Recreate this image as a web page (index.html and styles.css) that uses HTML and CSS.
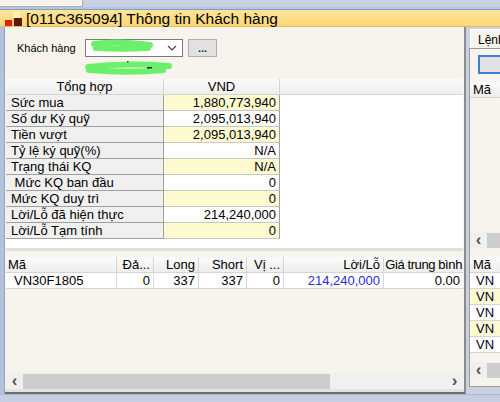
FILE: index.html
```html
<!DOCTYPE html>
<html>
<head>
<meta charset="utf-8">
<link rel="stylesheet" href="styles.css">
</head>
<body>
<div class="screen">
  <div class="topstrip"><div class="tl"></div><div class="tr"></div></div>
  <div class="wintop"></div>
  <div class="titlebar">
    <svg class="ticon" width="18" height="16" viewBox="0 0 18 16">
      <rect x="8" y="0" width="7" height="7" fill="#fff3b0"/>
      <rect x="0" y="9" width="7" height="6" fill="#e02010"/>
      <rect x="9" y="7" width="8" height="8" fill="#5a1a10"/>
      <rect x="7" y="7" width="2" height="8" fill="#f0c860"/>
    </svg>
    <span class="ttext">[011C365094] Thông tin Khách hàng</span>
  </div>
  <div class="content">
    <div class="lframe"></div>
    <div class="main">
      <div class="cust">
        <div class="custrow">
          <span class="custlabel">Khách hàng</span>
          <div class="combo">
            <svg class="blur1" width="70" height="14" viewBox="0 0 70 14">
              <path d="M6 5 C20 3 40 3 62 6 M8 9 C25 10 45 10 60 9" stroke="#6cf06c" stroke-width="6" stroke-linecap="round" fill="none"/>
            </svg>
            <svg class="chev" width="10" height="6" viewBox="0 0 10 6"><path d="M1 1 L5 5 L9 1" stroke="#404040" stroke-width="1.2" fill="none"/></svg>
          </div>
          <div class="btn">...</div>
        </div>
        <svg class="blur2" width="92" height="14" viewBox="0 0 92 14">
          <path d="M5 6 C30 3 60 3 86 5 M6 9 C30 11 60 11 80 9" stroke="#6cf06c" stroke-width="6" stroke-linecap="round" fill="none"/>
          <rect x="64" y="6" width="5" height="1.5" fill="#202020"/>
          <rect x="44" y="0" width="1.5" height="1.5" fill="#404040"/>
        </svg>
      </div>

      <div class="summary">
        <div class="srow shead"><div class="c1">Tổng hợp</div><div class="c2">VND</div><div class="c3"></div></div>
        <div class="srow"><div class="c1">Sức mua</div><div class="c2 y">1,880,773,940</div><div class="c3"></div></div>
        <div class="srow"><div class="c1">Số dư Ký quỹ</div><div class="c2">2,095,013,940</div><div class="c3"></div></div>
        <div class="srow"><div class="c1">Tiền vượt</div><div class="c2 y">2,095,013,940</div><div class="c3"></div></div>
        <div class="srow"><div class="c1">Tỷ lệ ký quỹ(%)</div><div class="c2">N/A</div><div class="c3"></div></div>
        <div class="srow"><div class="c1">Trạng thái KQ</div><div class="c2 y">N/A</div><div class="c3"></div></div>
        <div class="srow"><div class="c1">&nbsp;Mức KQ ban đầu</div><div class="c2">0</div><div class="c3"></div></div>
        <div class="srow"><div class="c1">Mức KQ duy trì</div><div class="c2 y">0</div><div class="c3"></div></div>
        <div class="srow"><div class="c1">Lời/Lỗ đã hiện thực</div><div class="c2">214,240,000</div><div class="c3"></div></div>
        <div class="srow"><div class="c1">Lời/Lỗ Tạm tính</div><div class="c2 y">0</div><div class="c3"></div></div>
        <div class="sfill"></div>
      </div>

      <div class="positions">
        <div class="prow phead">
          <div class="p1 l">Mã</div><div class="p2">Đả...</div><div class="p3">Long</div><div class="p4">Short</div><div class="p5">Vị ...</div><div class="p6">Lời/Lỗ</div><div class="p7 tight">Giá trung bình</div>
        </div>
        <div class="prow pdata">
          <div class="p1 l ind">VN30F1805</div><div class="p2">0</div><div class="p3">337</div><div class="p4">337</div><div class="p5">0</div><div class="p6 blue">214,240,000</div><div class="p7">0.00</div>
        </div>
        <div class="pfill"></div>
        <div class="hscroll">
          <span class="arr">&lsaquo;</span>
          <div class="track"><div class="thumb"></div></div>
          <span class="arr">&rsaquo;</span>
        </div>
      </div>
    </div>
    <div class="side">
      <div class="tab">Lệnh</div>
      <div class="sbox">
        <div class="sbtn"></div>
        <div class="sgrid1">
          <div class="sh">Mã</div>
          <div class="sgfill"></div>
          <div class="sscroll"><span class="arr">&lsaquo;</span><div class="sthumb"></div></div>
        </div>
        <div class="sgrid2">
          <div class="sh">Mã</div>
          <div class="sr">VN</div>
          <div class="sr y">VN</div>
          <div class="sr">VN</div>
          <div class="sr y">VN</div>
          <div class="sr">VN</div>
          <div class="sgfill"></div>
          <div class="sscroll"><span class="arr">&lsaquo;</span><div class="sthumb"></div></div>
        </div>
      </div>
    </div>
  </div>
  <div class="bottomband"></div>
</div>
</body>
</html>
```

FILE: styles.css
```css
* { box-sizing: border-box; }
html, body { margin: 0; padding: 0; }
body {
  width: 500px; height: 402px; overflow: hidden;
  font-family: "Liberation Sans", Arial, sans-serif;
  font-size: 13px; color: #000;
  background: #c9d2e3;
}
.screen { width: 500px; height: 402px; display: flex; flex-direction: column; }

.topstrip { height: 7px; display: flex; }
.tl { width: 83px; background: #f6f4ec; border-right: 1px solid #b0b0b0; border-bottom: 1px solid #b0b0b0; }
.tr { flex: 1; background: #c9d2e3; }
.wintop { height: 3px; background: #b7c6de; border-bottom: 1px solid #7f9fd0; }

.titlebar {
  height: 17px; display: flex; align-items: center;
  background: linear-gradient(#fde39a, #fdd876);
  border-bottom: 1px solid #e3bc5c;
  padding-left: 5px;
}
.ticon { flex: none; margin-top: 1px; }
.ttext { font-size: 15.5px; margin-left: 3px; line-height: 17px; white-space: nowrap; }

.content { flex: 1; display: flex; min-height: 0; }
.lframe { width: 5px; flex: none; background: #b3c2da; border-right: 1px solid #8fa4c6; }
.main {
  width: 461px; flex: none; display: flex; flex-direction: column;
  background: #f6f4ec;
  border-right: 2px solid #8c8c8c;
  border-bottom: 2px solid #6e6e6e;
  box-shadow: inset 0 -3px 0 #e4e2da;
  padding-left: 1px;
}

.cust { height: 52px; position: relative; }
.custrow { display: flex; align-items: center; padding: 12px 0 0 11px; }
.custlabel { font-size: 11px; width: 68px; }
.combo {
  width: 98px; height: 18px; background: #fff; border: 1px solid #7a7a7a;
  display: flex; align-items: center; justify-content: space-between;
  padding: 0 5px 0 2px;
}
.blur1 { margin-top: -4px; filter: blur(0.6px); }
.btn {
  width: 29px; height: 18px; margin-left: 5px;
  background: #e1e1e1; border: 1px solid #adadad;
  font-size: 11px; font-weight: bold; color: #203050;
  display: flex; align-items: center; justify-content: center; line-height: 1;
}
.blur2 { position: absolute; left: 77px; top: 34px; filter: blur(0.6px); }

.summary { width: 457px; height: 172px; background: #fff; display: flex; flex-direction: column; border-bottom: 3px solid #e0e0e0; }
.srow { display: flex; height: 16px; flex: none; }
.srow > div { line-height: 15px; white-space: nowrap; }
.c1 { width: 158px; background: #f0f0f0; border-right: 1px solid #a0a0a0; border-bottom: 1px solid #a0a0a0; padding-left: 5px; }
.c2 { width: 116px; text-align: right; padding-right: 3px; border-right: 1px solid #a0a0a0; border-bottom: 1px solid #c8c8c8; }
.c2.y { background: #fffbd0; }
.c3 { flex: 1; }
.shead { background: linear-gradient(#fbfbfb, #ededed); }
.shead > div { background: transparent; border-bottom: 1px solid #d5d5d5; text-align: center; padding: 0; }
.shead .c1, .shead .c2 { border-right: 1px solid #d5d5d5; }
.shead .c3 { border-bottom: 1px solid #d5d5d5; }
.sfill { flex: 1; }

.positions { width: 457px; margin-top: 6px; flex: 1; display: flex; flex-direction: column; }
.prow { display: flex; height: 16px; flex: none; }
.prow > div { line-height: 15px; white-space: nowrap; text-align: right; padding-right: 3px; border-right: 1px solid #d5d5d5; border-bottom: 1px solid #d5d5d5; overflow: hidden; }
.phead { background: linear-gradient(#fbfbfb, #ededed); }
.pdata { background: #fff; }
.pdata > div { border-right-color: #dadada; }
.p1 { width: 111px; }
.p2 { width: 37px; }
.p3 { width: 45px; }
.p4 { width: 48px; }
.p5 { width: 37px; }
.p6 { width: 100px; }
.p7 { flex: 1; border-right: none !important; }
.prow > .tight { letter-spacing: -0.4px; padding-right: 1px; }
.l { text-align: left !important; padding-left: 2px; }
.ind { padding-left: 8px; }
.blue { color: #2b2bdc; }
.pfill { flex: 1; }
.hscroll { height: 16px; display: flex; align-items: center; background: #f0f0f0; margin-bottom: 3px; }
.arr { width: 17px; flex: none; text-align: center; font-size: 17px; line-height: 14px; color: #505050; font-weight: bold; }
.track { flex: 1; height: 15px; }
.thumb { width: 307px; height: 15px; background: #cdcdcd; }

.side { flex: 1; min-width: 0; overflow: hidden; padding: 2px 0 7px 3px; display: flex; flex-direction: column; }
.tab { height: 19px; margin-left: 1px; padding: 3px 0 0 7px; border-left: 1px solid #fff; border-top: 1px solid #fff; font-size: 12px; white-space: nowrap; background: #f6f4ec; }
.sbox { flex: 1; border: 1px solid #9a9a9a; border-right: none; padding: 6px 0 0 0; display: flex; flex-direction: column; background: #f6f4ec; }
.sbtn { height: 19px; margin-left: 8px; border: 2px solid #3c80d8; border-right: none; background: #e1e1e1; }
.sgrid1 { margin-top: 8px; height: 166px; display: flex; flex-direction: column; }
.sh { height: 16px; line-height: 15px; padding-left: 3px; background: linear-gradient(#fbfbfb, #ededed); border-bottom: 1px solid #d5d5d5; white-space: nowrap; }
.sgfill { flex: 1; }
.sscroll { height: 16px; display: flex; align-items: center; background: #f0f0f0; }
.sthumb { flex: 1; height: 15px; background: #cdcdcd; }
.sgrid2 { margin-top: 9px; flex: 1; display: flex; flex-direction: column; padding-bottom: 8px; }
.sr { height: 16px; line-height: 15px; padding-left: 6px; background: #fff; border-bottom: 1px solid #d5d5d5; color: #000030; white-space: nowrap; }
.sr.y { background: #fffbd0; }

.bottomband { height: 8px; background: #c6cfe1; border-top: 1px solid #a9b8d3; }
```
